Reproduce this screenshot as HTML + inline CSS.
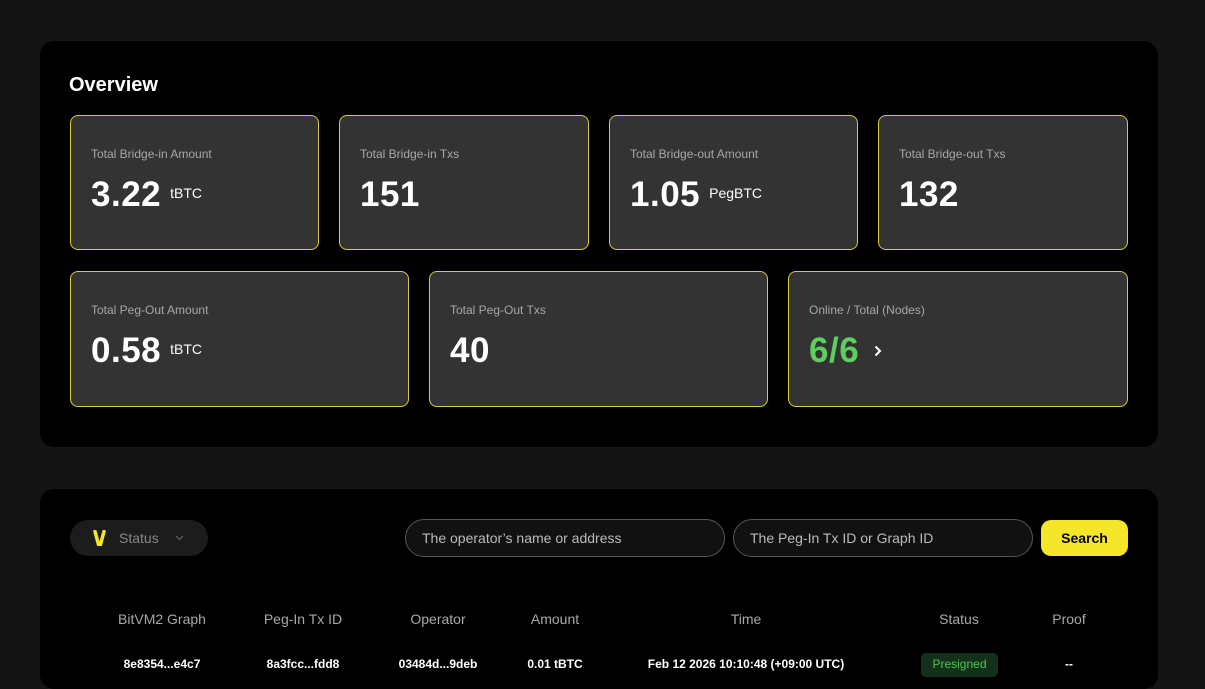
<!DOCTYPE html>
<html><head><style>
*{box-sizing:border-box;margin:0;padding:0}
body{width:1205px;height:670px;overflow:hidden;background:#141414;font-family:"Liberation Sans",sans-serif;color:#fff;position:relative}
.panel{position:absolute;left:40px;width:1118px;background:#000;border-radius:14px}
.card{position:absolute;background:#333;border:1px solid #d9cc35;border-radius:8px}
.lbl{position:absolute;left:20px;top:31px;font-size:12px;color:#a8a8a8}
.val{position:absolute;left:20px;top:59px;font-size:35px;font-weight:bold;white-space:nowrap;letter-spacing:0.5px}
.val span{font-size:14px;font-weight:normal;margin-left:9px;vertical-align:8px;letter-spacing:0}
.inp{position:absolute;top:519px;height:38px;border:1px solid #555;border-radius:19px;background:#111;color:#bbb;font-size:14px;padding:10px 16px}
.th{position:absolute;top:611px;font-size:14px;color:#a8a8a8;transform:translateX(-50%);white-space:nowrap}
.td{position:absolute;top:657px;font-size:12px;font-weight:bold;transform:translateX(-50%);white-space:nowrap}
</style></head><body>
<div class="panel" style="top:41px;height:406px"></div>
<div style="position:absolute;left:69px;top:74px;font-size:20px;font-weight:bold">Overview</div>
<div class="card" style="left:70px;top:115px;width:249px;height:135px"><div class="lbl">Total Bridge-in Amount</div><div class="val">3.22<span>tBTC</span></div></div>
<div class="card" style="left:339px;top:115px;width:250px;height:135px"><div class="lbl">Total Bridge-in Txs</div><div class="val">151</div></div>
<div class="card" style="left:609px;top:115px;width:249px;height:135px"><div class="lbl">Total Bridge-out Amount</div><div class="val">1.05<span>PegBTC</span></div></div>
<div class="card" style="left:878px;top:115px;width:250px;height:135px"><div class="lbl">Total Bridge-out Txs</div><div class="val">132</div></div>
<div class="card" style="left:70px;top:271px;width:339px;height:136px"><div class="lbl">Total Peg-Out Amount</div><div class="val">0.58<span>tBTC</span></div></div>
<div class="card" style="left:429px;top:271px;width:339px;height:136px"><div class="lbl">Total Peg-Out Txs</div><div class="val">40</div></div>
<div class="card" style="left:788px;top:271px;width:340px;height:136px"><div class="lbl">Online / Total (Nodes)</div><div class="val" style="color:#5ccf5c">6/6<svg style="margin-left:15px;vertical-align:5px" width="8" height="12" viewBox="0 0 8 12"><path d="M1.5 1.5 L6 6 L1.5 10.5" stroke="#fff" stroke-width="2" fill="none"/></svg></div></div>
<div class="panel" style="top:489px;height:200px"></div>
<div style="position:absolute;left:70px;top:520px;width:138px;height:36px;border-radius:18px;background:#1c1c1c">
<svg style="position:absolute;left:23px;top:10px" width="13" height="16" viewBox="0 0 13 16"><path d="M2 1.5 L5.5 14.5 M11 1.5 L7.5 14.5" stroke="#f5e62a" stroke-width="3.5" stroke-linecap="round"/></svg>
<span style="position:absolute;left:49px;top:10px;font-size:14px;color:#888">Status</span>
<svg style="position:absolute;left:105px;top:15px" width="9" height="6" viewBox="0 0 9 6"><path d="M1 1 L4.5 4.5 L8 1" stroke="#666" stroke-width="1.2" fill="none"/></svg></div>
<div class="inp" style="left:405px;width:320px">The operator’s name or address</div>
<div class="inp" style="left:733px;width:300px">The Peg-In Tx ID or Graph ID</div>
<div style="position:absolute;left:1041px;top:520px;width:87px;height:36px;border-radius:10px;background:#f5e62a;color:#000;font-size:14px;font-weight:bold;text-align:center;line-height:36px">Search</div>
<div class="th" style="left:162px">BitVM2 Graph</div>
<div class="th" style="left:303px">Peg-In Tx ID</div>
<div class="th" style="left:438px">Operator</div>
<div class="th" style="left:555px">Amount</div>
<div class="th" style="left:746px">Time</div>
<div class="th" style="left:959px">Status</div>
<div class="th" style="left:1069px">Proof</div>
<div class="td" style="left:162px">8e8354...e4c7</div>
<div class="td" style="left:303px">8a3fcc...fdd8</div>
<div class="td" style="left:438px">03484d...9deb</div>
<div class="td" style="left:555px">0.01 tBTC</div>
<div class="td" style="left:746px">Feb 12 2026 10:10:48 (+09:00 UTC)</div>
<div style="position:absolute;left:921px;top:653px;width:77px;height:24px;border-radius:5px;background:#12301a;color:#4cc94c;font-size:12px;text-align:center;line-height:22px">Presigned</div>
<div class="td" style="left:1069px">--</div>
</body></html>
